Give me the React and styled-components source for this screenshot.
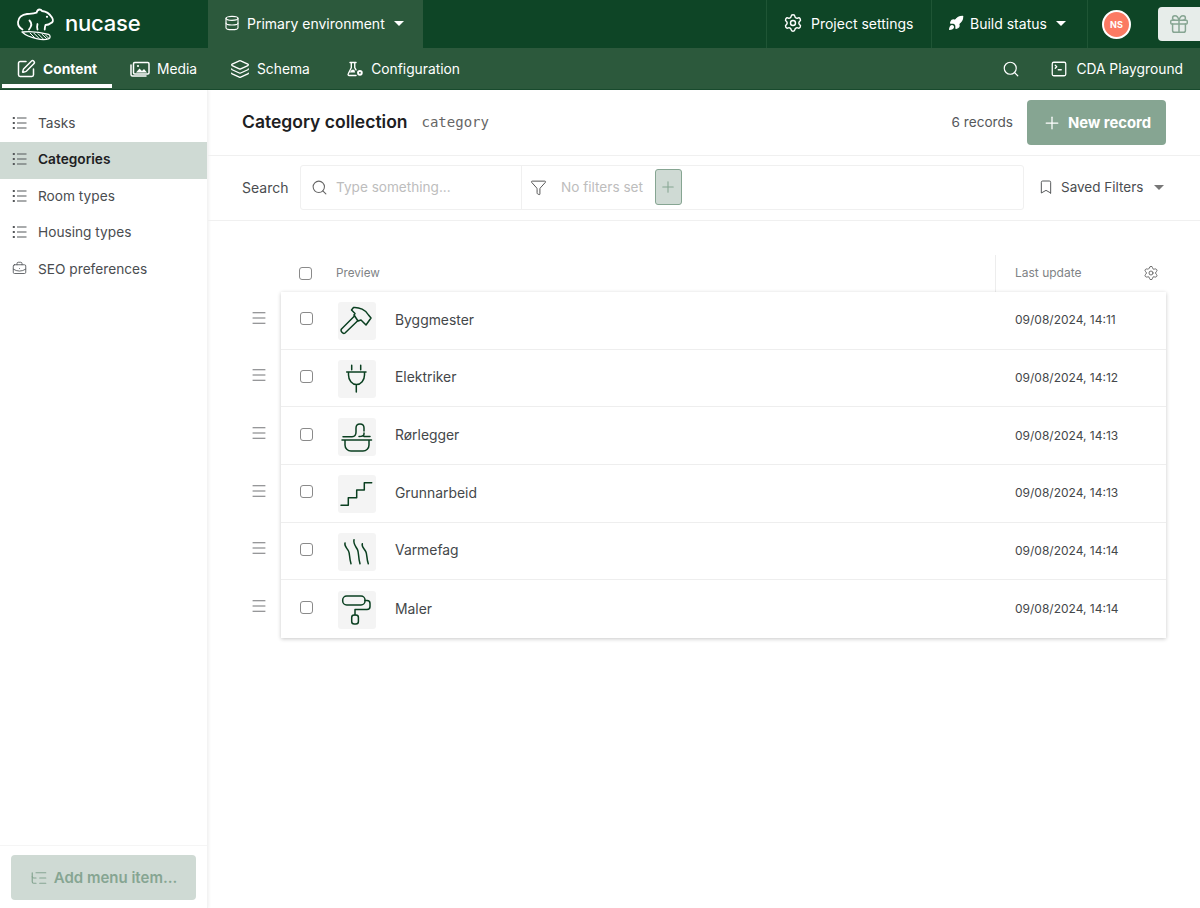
import React from 'react';
import styled, { createGlobalStyle } from 'styled-components';
import { Database, Settings, Rocket, Gift, Search, SquarePen, Layers, SquareTerminal, Plus, Funnel, Bookmark, Menu, BriefcaseBusiness, ListTree } from 'lucide-react';

const Global = createGlobalStyle`
  html, body { margin: 0; padding: 0; background: #fff; }
  body { font-family: Inter, "Noto Sans", "Liberation Sans", sans-serif; color: #2d2f31; }
  * { box-sizing: border-box; }
`;
const Page = styled.div`display:flex;flex-direction:column;width:1200px;height:908px;overflow:hidden;`;
const TopBar = styled.header`display:flex;align-items:stretch;height:48px;background:#0e4526;color:#fff;flex:none;`;
const Brand = styled.div`width:208px;display:flex;align-items:center;gap:9px;padding:0 0 2px 17px;font-size:22px;font-weight:500;letter-spacing:-.2px;`;
const EnvPicker = styled.div`width:215px;background:#2c593c;display:flex;align-items:center;gap:7px;padding:0 0 2px 16px;font-size:14px;`;
const Spacer = styled.div`flex:1;`;
const TopItem = styled.div`display:flex;align-items:center;gap:${p=>p.$gap}px;width:${p=>p.$w}px;flex:none;padding:0 0 2px 16px;border-left:1px solid #1f5535;font-size:14px;height:48px;white-space:nowrap;`;
const Caret = styled.span`display:inline-block;width:0;height:0;border-left:5px solid transparent;border-right:5px solid transparent;border-top:5px solid ${p=>p.$c||'#fff'};margin-left:${p=>p.$ml||0}px;`;
const Avatar = styled.div`width:29px;height:29px;border-radius:50%;background:#fb7a63;border:2px solid #fff;color:#fff;font-size:9px;font-weight:700;display:flex;align-items:center;justify-content:center;`;
const AvatarCell = styled.div`width:71px;flex:none;display:flex;align-items:center;padding-left:14px;border-left:1px solid #1f5535;`;
const GiftBtn = styled.div`width:42px;height:34px;margin-top:7px;background:#e7edea;border-radius:4px 0 0 4px;display:flex;align-items:center;padding-left:10px;color:#86a592;`;
const SubBar = styled.nav`display:flex;align-items:stretch;height:42px;background:#2c593c;color:#fff;flex:none;padding-left:2px;border-bottom:1px solid #184a2d;font-size:14px;`;
const Tab = styled.div`display:flex;align-items:center;gap:7px;padding:5px 0 0 ${p=>p.$pl}px;width:${p=>p.$w}px;flex:none;font-weight:${p=>p.$active?700:400};font-size:13.8px;border-bottom:4px solid ${p=>p.$active?'#fff':'transparent'};height:40px;white-space:nowrap;`;
const SubRight = styled.div`display:flex;align-items:center;color:#fff;padding-right:17px;`;
const SearchIconBox = styled.div`display:flex;margin-right:30px;`;
const Playground = styled.div`display:flex;align-items:center;gap:8px;font-size:13.8px;`;
const Body = styled.div`flex:1;display:flex;min-height:0;`;
const Side = styled.aside`width:208px;flex:none;display:flex;flex-direction:column;box-shadow:1px 0 3px rgba(0,0,0,.06);border-right:1px solid #f3f3f3;padding-top:15.5px;`;
const SideItem = styled.div`height:36.5px;display:flex;align-items:center;gap:11px;padding:0 0 2px 12px;font-size:13.7px;color:${p=>p.$active?'#1d2022':'#4a4d50'};font-weight:${p=>p.$active?600:400};background:${p=>p.$active?'#cfdad4':'transparent'};svg{color:#55585b;flex:none;}`;
const SideFoot = styled.div`margin-top:auto;border-top:1px solid #f5f5f5;padding:9px 11px 8px;`;
const AddBtn = styled.div`height:45px;border-radius:4px;background:#cfdad4;color:#86a592;display:flex;align-items:center;justify-content:center;gap:6px;font-size:15px;font-weight:600;`;
const Main = styled.main`flex:1;display:flex;flex-direction:column;min-width:0;`;
const Header = styled.div`height:66px;border-bottom:1px solid #f0f0f0;display:flex;align-items:center;padding:0 34px;flex:none;`;
const Title = styled.h1`margin:0 0 2px;font-size:17.5px;font-weight:600;color:#1d2022;line-height:1;`;
const Slug = styled.span`font-family:"DejaVu Sans Mono","Liberation Mono",monospace;font-size:14px;color:#666;margin:0 0 2px 14px;`;
const Count = styled.span`margin:0 14px 2px auto;font-size:13.6px;color:#55585b;`;
const NewBtn = styled.div`width:139px;height:45px;background:#86a592;color:#fff;border-radius:4px;display:flex;align-items:center;justify-content:center;gap:6px;font-size:14.8px;font-weight:700;`;
const SearchRow = styled.div`height:65px;border-bottom:1px solid #f0f0f0;display:flex;align-items:center;padding:0 34px 2px;flex:none;font-size:14px;white-space:nowrap;`;
const SearchLabel = styled.span`color:#4a4d50;width:58px;flex:none;`;
const SearchBox = styled.div`width:724px;height:45px;border:1px solid #f0f0f0;border-radius:3px;display:flex;align-items:center;flex:none;font-size:13.6px;`;
const InputPart = styled.div`width:221px;height:100%;border-right:1px solid #f0f0f0;display:flex;align-items:center;gap:8px;padding-left:10px;color:#bdbdbd;svg{color:#666;}`;
const FilterPart = styled.div`display:flex;align-items:center;color:#bdbdbd;padding-left:8px;svg{color:#555;}`;
const FilterText = styled.span`margin-left:14px;margin-right:12px;`;
const PlusBtn = styled.div`width:27px;height:36px;border:1px solid #86a592;border-radius:3px;background:#cfdad4;display:flex;align-items:center;justify-content:center;svg{color:#86a592;}`;
const Saved = styled.div`display:flex;align-items:center;margin-left:14px;color:#4a4d50;gap:7px;font-size:13.5px;`;
const TableWrap = styled.div`padding:34px 34px 0 44px;`;
const HeadRow = styled.div`height:37px;display:flex;align-items:center;font-size:12px;color:#808386;padding-left:47px;`;
const HeadCheck = styled.span`width:13px;height:13px;border:1px solid #8a8a8a;border-radius:3px;flex:none;`;
const Preview = styled.span`margin:0 0 2px 24px;font-size:11.7px;`;
const LastUpd = styled.div`margin-left:auto;width:171px;height:37px;border-left:1px solid #ededed;display:flex;align-items:center;justify-content:space-between;padding:0 7px 2px 19px;svg{color:#666;}`;
const RowsBox = styled.div`background:#fff;box-shadow:0 1px 4px rgba(0,0,0,.22);`;
const RowGrid = styled.div`display:grid;grid-template-columns:29px 1fr;`;
const Handles = styled.div`display:flex;flex-direction:column;color:#6f7173;`;
const Handle = styled.div`height:57.67px;display:flex;align-items:center;margin:-3px 0 3px -2px;`;
const Row = styled.div`height:57.67px;display:flex;align-items:center;padding-left:19px;border-bottom:${p=>p.$last?'none':'1px solid #eee'};font-size:13.9px;color:#44474a;`;
const RowCheck = styled.span`width:13px;height:13px;border:1px solid #8a8a8a;border-radius:3px;flex:none;margin-bottom:3px;`;
const Thumb = styled.div`width:38px;height:38px;border-radius:3px;background:#f4f4f4;margin:2px 0 0 25px;display:flex;align-items:center;justify-content:center;flex:none;`;
const RowName = styled.span`margin:0 0 1px 19px;`;
const RowDate = styled.span`margin:0 0 1px auto;width:151px;font-size:12px;color:#44474a;`;

const ic = { fill:'none', stroke:'#0a3f20', strokeWidth:1.5, strokeLinecap:'round', strokeLinejoin:'round', width:34, height:34, viewBox:'0 0 34 34' };
const Hammer = () => <svg {...ic}><path d="M11.500 6 13.500 3.500C19 3 26 6 28.500 11L31 14 26 21 21 16 18 17 14 11 15 9.500Z"/><path d="M14.500 12 1.500 25C0 27 3 30.500 5 29L18 16.500"/></svg>;
const Plug = () => <svg {...ic}><path d="M11.700 3.300v4.400M20.700 3.300v4.400M6.700 10H26M8.500 10v3a8 9.500 0 0 0 16 0v-3M16.300 22.700V30"/></svg>;
const Sink = () => <svg {...ic}><path d="M3 16.700H12C15 16.700 16 15 16 12V8C16 5 18 4 20 4 22.500 4 24 5.500 24 8V11"/><path d="M19 16.500C22 16.500 24 16 24 14V13M24 16.500H30"/><path d="M2 20H31.500M5 20v5a6 6 0 0 0 6 6h12a6 6 0 0 0 6-6v-5"/></svg>;
const Stairs = () => <svg {...ic}><path d="M1 28.300H8.300V20.700H16.700V13H24.300V5.700H31.700"/></svg>;
const Heat = () => <svg {...ic}><path d="M5 8c-1 3 2 5 3.500 8 1.500 3 .5 6 2.500 12.700M14 4.700c-1 4 2 7 3.500 10 1.500 3 .5 7 2.500 14M22.300 8.700c-1 3 2 5 3.500 8 1.500 3 .5 6 2.500 12"/></svg>;
const Roller = () => <svg {...ic}><rect x="2.700" y="3" width="22.300" height="9" rx="4"/><path d="M25 7.500h2c2 0 3 1 3 3v3c0 2-1 3-3 3H15v5.500"/><rect x="11.700" y="22" width="6.700" height="9" rx="2.500"/></svg>;
const Beaver = () => (
  <svg width="39" height="33" viewBox="0 0 39 33" fill="none" stroke="#fff" strokeWidth="1.800" strokeLinecap="round" strokeLinejoin="round" style={{flex:'none',overflow:'visible'}}>
    <path d="M5.500 22.500C2 20.500.8 18 1 15 1.300 10.500 5 7.500 10 7c3.500-.3 6.500-.2 9.500-1.300C20 3.800 21 2.500 22.500 2.500c1.200 0 2 .6 2.500 1.500 4 .4 7.500 2.500 10 6.500 1.500 2.500 1.200 5-1 5.500-1.500 1.300-3.500 2-5.500 2-.5 1.500-.8 3-.8 4.500"/>
    <circle cx="30" cy="9.800" r="1.100" fill="#fff" stroke="none"/>
    <path d="M12.500 13.500c2.500 2.500 2 6-.5 9M20.500 17c-.5 2-.5 4 0 5.500"/>
    <path d="M5 25c9-1 18 0 26.500 2.300 2 .7 2 3.700.5 4.300-3 1.200-8.500 1-12.500 0C14 30.500 8.500 28.200 5 25z" strokeWidth="1.300"/>
    <path d="M13 26l4.500 4.500M17 26.300l5 5M21 26.700l5 5M25 27.200l4.500 4.300M28.500 28l3 3" strokeWidth="1"/>
  </svg>
);
const ListIcon = () => (
  <svg width="15" height="14" viewBox="0 0 15 14" fill="none" stroke="currentColor" strokeWidth="1.100">
    <path d="M5 2h9.500M5 7h9.500M5 12h9.500"/>
    <path d="M.8 2h2M.8 7h2M.8 12h2" strokeWidth="2"/>
  </svg>
);
const MediaIcon = () => (
  <svg width="20" height="18" viewBox="0 0 20 18" fill="none" stroke="#fff" strokeWidth="1.500" strokeLinejoin="round" strokeLinecap="round">
    <rect x="3.500" y="2.500" width="15.500" height="11.500" rx="1.200"/>
    <path d="M1 5v9.500c0 1 .7 1.500 1.500 1.500H16"/>
    <path d="M6 12.500l3.500-4 2.500 2.500 2-2 3 3.500z" fill="#fff" stroke="none"/>
    <circle cx="8" cy="6" r="1.100" fill="#fff" stroke="none"/>
  </svg>
);
const Flask = () => (
  <svg width="20" height="20" viewBox="0 0 20 20" fill="none" stroke="#fff" strokeWidth="1.600" strokeLinecap="round" strokeLinejoin="round">
    <path d="M3.500 2.500h7M5 2.500v6L1.500 15.500c-.6 1 0 2 1 2h8M9 2.500v6l1.500 2.500"/>
    <path d="M3 14l2.500-3h3l1 3z" fill="#fff" stroke="none"/>
    <circle cx="15" cy="14.500" r="3.300" fill="#fff" stroke="none"/><circle cx="15" cy="14.500" r="1.100" fill="#2c593c" stroke="none"/>
  </svg>
);

const rows = [
  ['Byggmester','09/08/2024, 14:11',Hammer],['Elektriker','09/08/2024, 14:12',Plug],['Rørlegger','09/08/2024, 14:13',Sink],
  ['Grunnarbeid','09/08/2024, 14:13',Stairs],['Varmefag','09/08/2024, 14:14',Heat],['Maler','09/08/2024, 14:14',Roller],
];

export default function App() {
  return (
    <Page>
      <Global />
      <TopBar>
        <Brand><Beaver />nucase</Brand>
        <EnvPicker><Database size={16} strokeWidth={1.7}/>Primary environment<Caret $ml={2}/></EnvPicker>
        <Spacer />
        <TopItem $gap={8} $w={165}><Settings size={20} strokeWidth={1.7}/>Project settings</TopItem>
        <TopItem $gap={6} $w={156}><Rocket size={16} strokeWidth={2} fill="#fff"/>Build status<Caret $ml={3}/></TopItem>
        <AvatarCell><Avatar>NS</Avatar></AvatarCell>
        <GiftBtn><Gift size={22} strokeWidth={1.6}/></GiftBtn>
      </TopBar>
      <SubBar>
        <Tab $active $pl={14} $w={110}><SquarePen size={20} strokeWidth={1.8}/>Content</Tab>
        <Tab $pl={18} $w={105}><MediaIcon />Media</Tab>
        <Tab $pl={13} $w={113}><Layers size={20} strokeWidth={1.6}/>Schema</Tab>
        <Tab $pl={17} $w={130}><Flask />Configuration</Tab>
        <Spacer />
        <SubRight>
          <SearchIconBox><Search size={18} strokeWidth={1.6}/></SearchIconBox>
          <Playground><SquareTerminal size={18} strokeWidth={1.7}/>CDA Playground</Playground>
        </SubRight>
      </SubBar>
      <Body>
        <Side>
          <SideItem><ListIcon />Tasks</SideItem>
          <SideItem $active><ListIcon />Categories</SideItem>
          <SideItem><ListIcon />Room types</SideItem>
          <SideItem><ListIcon />Housing types</SideItem>
          <SideItem><BriefcaseBusiness size={15} strokeWidth={1.4}/>SEO preferences</SideItem>
          <SideFoot><AddBtn><ListTree size={18} strokeWidth={1.6}/>Add menu item...</AddBtn></SideFoot>
        </Side>
        <Main>
          <Header>
            <Title>Category collection</Title><Slug>category</Slug>
            <Count>6 records</Count>
            <NewBtn><Plus size={20} strokeWidth={1.5}/>New record</NewBtn>
          </Header>
          <SearchRow>
            <SearchLabel>Search</SearchLabel>
            <SearchBox>
              <InputPart><Search size={17} strokeWidth={1.5}/>Type something...</InputPart>
              <FilterPart><Funnel size={17} strokeWidth={1.4}/><FilterText>No filters set</FilterText><PlusBtn><Plus size={18} strokeWidth={1.4}/></PlusBtn></FilterPart>
            </SearchBox>
            <Saved><Bookmark size={16} strokeWidth={1.4}/>Saved Filters<Caret $c="#777" $ml={4}/></Saved>
          </SearchRow>
          <TableWrap>
            <HeadRow>
              <HeadCheck /><Preview>Preview</Preview>
              <LastUpd>Last update<Settings size={16} strokeWidth={1.4}/></LastUpd>
            </HeadRow>
            <RowGrid>
              <Handles>{rows.map(r=><Handle key={r[0]}><Menu size={18} strokeWidth={1.3}/></Handle>)}</Handles>
              <RowsBox>
                {rows.map((r,i)=>{const I=r[2];return (
                  <Row key={r[0]} $last={i===rows.length-1}>
                    <RowCheck /><Thumb><I /></Thumb><RowName>{r[0]}</RowName><RowDate>{r[1]}</RowDate>
                  </Row>);})}
              </RowsBox>
            </RowGrid>
          </TableWrap>
        </Main>
      </Body>
    </Page>
  );
}
